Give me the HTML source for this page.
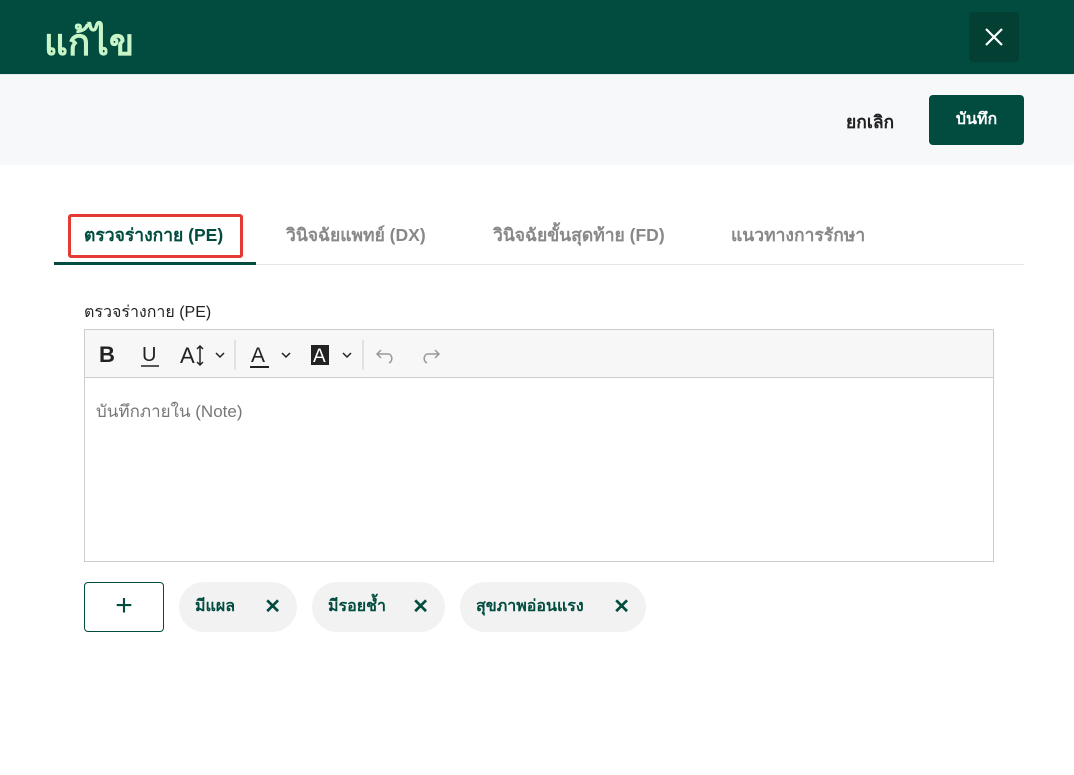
<!DOCTYPE html>
<html><head><meta charset="utf-8"><style>
*{box-sizing:border-box;margin:0;padding:0}
body{width:1074px;height:775px;background:#fff;font-family:"Liberation Sans","Noto Sans CJK SC",sans-serif;position:relative;overflow:hidden}
.hdr{position:absolute;left:0;top:0;width:1074px;height:74px;background:#024c3f}
.title{position:absolute;left:44px;top:13px;font-size:37px;font-weight:bold;color:#c8f5c8}
.xbtn{position:absolute;left:969px;top:12px;width:50px;height:50px;background:#043f34;border-radius:4px}
.bar{position:absolute;left:0;top:74px;width:1074px;height:91px;background:#f7f8fa;border-top:1px solid #e6e9ee}
.cancel{position:absolute;left:846px;top:108px;font-size:17.5px;font-weight:bold;color:#222}
.save{position:absolute;left:929px;top:95px;width:95px;height:50px;background:#024c3f;border-radius:4px;color:#fff;font-size:16px;font-weight:bold;text-align:center;line-height:50px}
.tab{position:absolute;top:221px;font-size:17.5px;font-weight:bold;color:#888}
.tabline{position:absolute;left:54px;top:264px;width:970px;height:1px;background:#e3e5e8}
.active{position:absolute;left:54px;top:262px;width:202px;height:3px;background:#024c3f}
.redbox{position:absolute;left:68px;top:214px;width:175px;height:44px;border:3px solid #e53935;border-radius:3px}
.lbl{position:absolute;left:84px;top:300px;font-size:16px;color:#222}
.ed{position:absolute;left:84px;top:329px;width:910px;height:233px;border:1px solid #ccc}
.tb{height:48px;background:#f7f7f7;border-bottom:1px solid #ccc;position:relative}
.ph{position:absolute;left:11px;top:68px;font-size:17px;color:#777}
.plus{position:absolute;left:84px;top:582px;width:80px;height:50px;border:1px solid #024c3f;border-radius:4px;font-size:30px;color:#024c3f;text-align:center;line-height:46px}
.chip{position:absolute;top:582px;height:50px;background:#f2f2f2;border-radius:25px;font-size:16px;font-weight:bold;color:#024c3f;line-height:50px;padding-left:16px}
.chip b{position:absolute;right:16px;top:0;font-size:20px}
</style></head><body>
<div class="hdr"><div class="title">แก้ไข</div>
<div class="xbtn"><svg width="50" height="50"><path d="M17 17L33 33M33 17L17 33" stroke="#fff" stroke-width="2.2"/></svg></div></div>
<div class="bar"></div>
<div class="cancel">ยกเลิก</div>
<div class="save">บันทึก</div>
<div class="tab" style="left:84px;color:#024c3f">ตรวจร่างกาย (PE)</div>
<div class="tab" style="left:286px">วินิจฉัยแพทย์ (DX)</div>
<div class="tab" style="left:493px">วินิจฉัยขั้นสุดท้าย (FD)</div>
<div class="tab" style="left:731px">แนวทางการรักษา</div>
<div class="tabline"></div><div class="active"></div><div class="redbox"></div>
<div class="lbl">ตรวจร่างกาย (PE)</div>
<div class="ed"><div class="tb">
<svg width="380" height="48" style="position:absolute;left:0;top:0">
<text x="14" y="32" font-family="Liberation Sans" font-weight="bold" font-size="22" fill="#222">B</text>
<text x="57" y="31" font-family="Liberation Sans" font-size="20" fill="#222">U</text><line x1="56" y1="36" x2="74" y2="36" stroke="#222" stroke-width="1.5"/>
<text x="95" y="33" font-family="Liberation Sans" font-size="22" fill="#222">A</text>
<path d="M115 16V35M112 19L115 16L118 19M112 32L115 35L118 32" stroke="#222" stroke-width="1.5" fill="none"/>
<path d="M131 23L135 27L139 23" stroke="#222" stroke-width="1.5" fill="none"/>
<line x1="150" y1="10" x2="150" y2="40" stroke="#ccc"/>
<text x="166" y="32" font-family="Liberation Sans" font-size="21" fill="#222">A</text><line x1="165" y1="37" x2="184" y2="37" stroke="#222" stroke-width="2"/>
<path d="M197 23L201 27L205 23" stroke="#222" stroke-width="1.5" fill="none"/>
<rect x="226" y="15" width="18" height="20" fill="#222"/><text x="228" y="32" font-family="Liberation Sans" font-size="19" fill="#fff">A</text>
<path d="M258 23L262 27L266 23" stroke="#222" stroke-width="1.5" fill="none"/>
<line x1="278" y1="10" x2="278" y2="40" stroke="#ccc"/>
<path d="M296 20L292 24L296 28M292 24H304A5 5 0 0 1 304 33" stroke="#999" stroke-width="1.5" fill="none"/>
<path d="M350 20L354 24L350 28M354 24H342A5 5 0 0 0 342 33" stroke="#999" stroke-width="1.5" fill="none"/>
</svg></div><div class="ph">บันทึกภายใน (Note)</div></div>
<div class="plus">+</div>
<div class="chip" style="left:179px;width:118px">มีแผล<b>✕</b></div>
<div class="chip" style="left:312px;width:133px">มีรอยช้ำ<b>✕</b></div>
<div class="chip" style="left:460px;width:186px">สุขภาพอ่อนแรง<b>✕</b></div>
</body></html>
